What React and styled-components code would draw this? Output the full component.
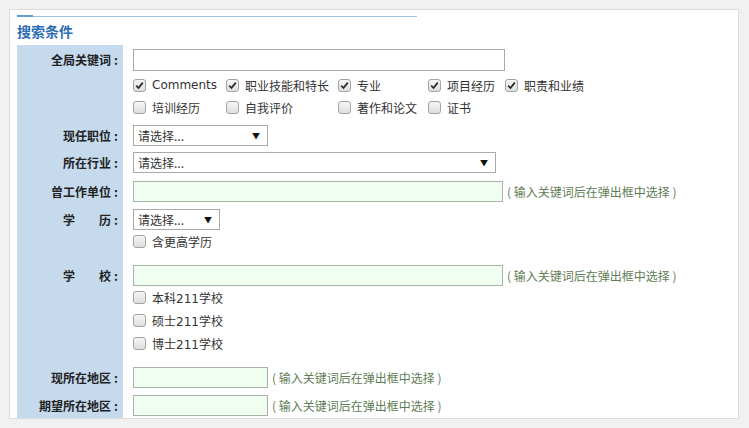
import React from 'react';
import styled, { createGlobalStyle } from 'styled-components';

const GlobalStyle = createGlobalStyle`
  html, body {
    margin: 0;
    padding: 0;
    background: #f1f1f1;
  }
  body {
    font-family: "DejaVu Sans", "Noto Sans CJK SC", sans-serif;
    font-size: 12px;
    color: #333;
  }
`;

const Page = styled.div`
  width: 749px;
  height: 428px;
  box-sizing: border-box;
  padding: 9px 10px 9px 9px;
  background: #f1f1f1;
`;

const Panel = styled.div`
  height: 100%;
  box-sizing: border-box;
  background: #fff;
  border: 1px solid #dcdcdc;
  padding: 5px 7px 0 7px;
  overflow: hidden;
`;

const HeadLine = styled.div`
  width: 400px;
  height: 2px;
  display: flex;
  align-items: flex-end;
  .bar {
    width: 16px;
    height: 2px;
    background: #5b9fd6;
  }
  .line {
    flex: 1;
    height: 1px;
    background: #9cc3e4;
  }
`;

const Title = styled.h2`
  margin: 4px 0 4px 0;
  font-size: 14px;
  line-height: 20px;
  font-weight: 700;
  color: #2c6db3;
  font-family: "Noto Sans CJK SC", sans-serif;
`;

const Row = styled.div`
  display: flex;
  height: ${(p) => p.h}px;
`;

const Label = styled.div`
  width: 106px;
  flex-shrink: 0;
  box-sizing: border-box;
  background: #c6daee;
  text-align: right;
  padding: ${(p) => p.top}px 5px 0 0;
  line-height: ${(p) => p.lh || 21}px;
  font-weight: 700;
  color: #222;
  font-family: "Noto Sans CJK SC", sans-serif;
  white-space: pre;
  .colon {
    padding-left: 3px;
  }
`;

const Field = styled.div`
  flex: 1;
  padding: ${(p) => p.top}px 0 0 10px;
`;

const Line = styled.div`
  display: flex;
  align-items: center;
`;

const TextInput = styled.div`
  width: ${(p) => p.w}px;
  height: ${(p) => p.h || 21}px;
  box-sizing: border-box;
  border: 1px solid ${(p) => (p.green ? '#a8b4a8' : '#a9a9a9')};
  background: ${(p) => (p.green ? '#effef0' : '#fff')};
`;

const SelectBox = styled.div`
  width: ${(p) => p.w}px;
  height: 21px;
  box-sizing: border-box;
  border: 1px solid #a9a9a9;
  background: #fff;
  display: flex;
  align-items: center;
  justify-content: space-between;
  padding: 0 7px 0 4px;
  font-family: "Noto Sans CJK SC", sans-serif;
  color: #333;
  span.arrow {
    font-size: 8px;
    color: #111;
  }
`;

const Hint = styled.span`
  margin-left: 4px;
  color: #5f7d55;
  font-family: "Noto Sans CJK SC", sans-serif;
  white-space: pre;
`;

const CheckGrid = styled.div`
  margin-top: 3px;
  display: grid;
  grid-template-columns: 93px 112px 90px 77px auto;
  grid-auto-rows: 22px;
`;

const CheckItem = styled.label`
  display: flex;
  align-items: center;
  height: ${(p) => p.h || 22}px;
  gap: 6px;
  color: #333;
  white-space: nowrap;
`;

const Box = styled.span`
  width: 13px;
  height: 13px;
  box-sizing: border-box;
  border: 1px solid #a3a3a3;
  border-radius: 3px;
  background: linear-gradient(#f6f6f6, #dedede);
  display: flex;
  align-items: center;
  justify-content: center;
`;

const CheckBox = ({ label, on, h }) => (
  <CheckItem h={h}>
    <Box>
      {on && (
        <svg width="9" height="9" viewBox="0 0 9 9">
          <path d="M1.2 4.6 L3.5 7 L7.8 1.6" fill="none" stroke="#2a2a2a" strokeWidth="1.8" />
        </svg>
      )}
    </Box>
    <span>{label}</span>
  </CheckItem>
);

const Select = ({ w }) => (
  <SelectBox w={w}>
    <span>请选择...</span>
    <span className="arrow">▼</span>
  </SelectBox>
);

const FieldLabel = ({ top, lh, children }) => (
  <Label top={top} lh={lh}>
    {children}
    <span className="colon">:</span>
  </Label>
);

const keywordChecks = [
  ['Comments', true],
  ['职业技能和特长', true],
  ['专业', true],
  ['项目经历', true],
  ['职责和业绩', true],
  ['培训经历', false],
  ['自我评价', false],
  ['著作和论文', false],
  ['证书', false],
];

const hint = '( 输入关键词后在弹出框中选择 )';

export default function App() {
  return (
    <Page>
      <GlobalStyle />
      <Panel>
        <HeadLine>
          <div className="bar" />
          <div className="line" />
        </HeadLine>
        <Title>搜索条件</Title>

        <Row h={76}>
          <FieldLabel top={4} lh={22}>全局关键词</FieldLabel>
          <Field top={4}>
            <TextInput w={372} h={22} />
            <CheckGrid>
              {keywordChecks.map(([l, on]) => (
                <CheckBox key={l} label={l} on={on} />
              ))}
            </CheckGrid>
          </Field>
        </Row>

        <Row h={28}>
          <FieldLabel top={4}>现任职位</FieldLabel>
          <Field top={4}>
            <Select w={135} />
          </Field>
        </Row>

        <Row h={28}>
          <FieldLabel top={3}>所在行业</FieldLabel>
          <Field top={3}>
            <Select w={363} />
          </Field>
        </Row>

        <Row h={28}>
          <FieldLabel top={4}>曾工作单位</FieldLabel>
          <Field top={4}>
            <Line>
              <TextInput w={370} green />
              <Hint>{hint}</Hint>
            </Line>
          </Field>
        </Row>

        <Row h={55}>
          <FieldLabel top={4}>{'学　　历'}</FieldLabel>
          <Field top={4}>
            <Select w={87} />
            <CheckBox label="含更高学历" h={23} />
          </Field>
        </Row>

        <Row h={104}>
          <FieldLabel top={5}>{'学　　校'}</FieldLabel>
          <Field top={5}>
            <Line>
              <TextInput w={370} green />
              <Hint>{hint}</Hint>
            </Line>
            <CheckBox label="本科211学校" h={23} />
            <CheckBox label="硕士211学校" h={23} />
            <CheckBox label="博士211学校" h={23} />
          </Field>
        </Row>

        <Row h={28}>
          <FieldLabel top={3}>现所在地区</FieldLabel>
          <Field top={3}>
            <Line>
              <TextInput w={135} green />
              <Hint>{hint}</Hint>
            </Line>
          </Field>
        </Row>

        <Row h={27}>
          <FieldLabel top={3}>期望所在地区</FieldLabel>
          <Field top={3}>
            <Line>
              <TextInput w={135} green />
              <Hint>{hint}</Hint>
            </Line>
          </Field>
        </Row>
      </Panel>
    </Page>
  );
}
